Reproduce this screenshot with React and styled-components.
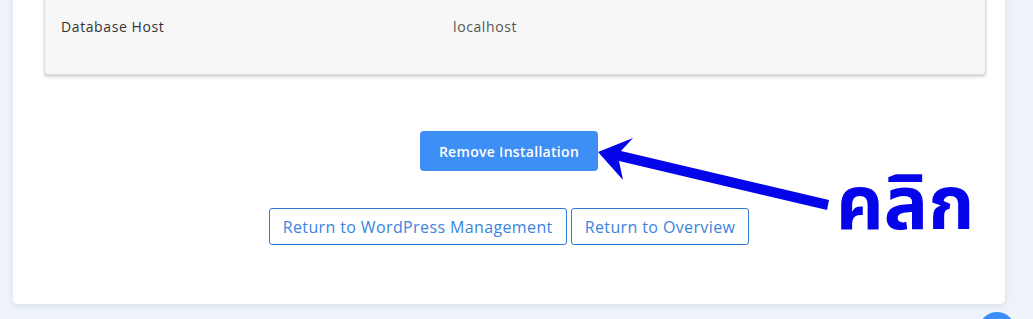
import React from 'react';
import styled, { createGlobalStyle } from 'styled-components';

const GlobalStyle = createGlobalStyle`
    html, body {
        margin: 0;
        padding: 0;
        background: #eef3f9;
        font-family: 'Open Sans', 'Liberation Sans', sans-serif;
        overflow: hidden;
    }
`;

const Page = styled.div`
    position: relative;
    display: flex;
    flex-direction: column;
    width: 1033px;
    height: 319px;
    padding: 0 28px 0 13px;
    box-sizing: border-box;
    overflow: hidden;
`;

const Card = styled.div`
    margin-top: -20px;
    background: #fff;
    border-radius: 0 0 5px 5px;
    box-shadow: 0 2px 6px rgba(30, 50, 80, 0.1);
    padding: 0 25px 59px;
    display: flex;
    flex-direction: column;
    align-items: center;
`;

const Details = styled.div`
    align-self: stretch;
    margin: 0 -6px 0 6px;
    background: #f7f7f7;
    border: 1px solid #dcdcdc;
    border-top: none;
    border-radius: 0 0 4px 4px;
    box-shadow: 0 2px 3px rgba(0, 0, 0, 0.18);
    padding: 37px 16px 37px;
`;

const Row = styled.div`
    display: grid;
    grid-template-columns: 392px 1fr;
    font-size: 14px;
    line-height: 20px;
    letter-spacing: 0.6px;
    color: #333;
`;

const Value = styled.span`
    color: #555;
`;

const PrimaryButton = styled.button`
    margin-top: 56px;
    width: 178px;
    height: 40px;
    border: none;
    border-radius: 4px;
    background: #3d8ef5;
    color: #fff;
    font-family: inherit;
    font-size: 14px;
    font-weight: 600;
    letter-spacing: 0.3px;
    cursor: pointer;
`;

const ButtonGroup = styled.div`
    margin-top: 37px;
    display: flex;
    gap: 4px;
`;

const OutlineButton = styled.button`
    height: 37px;
    padding: 0 13px;
    background: #fff;
    border: 1px solid #2f7bd6;
    border-radius: 3px;
    color: #3a84de;
    font-family: inherit;
    font-size: 16px;
    letter-spacing: 0.38px;
    cursor: pointer;
`;

const Arrow = styled.svg`
    position: absolute;
    left: 590px;
    top: 130px;
`;

const Note = styled.div`
    position: absolute;
    left: 836px;
    top: 169px;
    color: #0505ea;
    font-size: 74px;
    font-weight: 700;
    line-height: 1;
    font-family: 'Noto Sans Thai', 'Noto Sans', 'DejaVu Sans', sans-serif;
`;

const ChatBubble = styled.div`
    position: absolute;
    left: 979px;
    top: 312px;
    width: 36px;
    height: 36px;
    border-radius: 50%;
    background: #3a8ef5;
`;

export default function App() {
    return (
        <>
            <GlobalStyle />
            <Page>
                <Card>
                    <Details>
                        <Row>
                            <span>Database Host</span>
                            <Value>localhost</Value>
                        </Row>
                    </Details>
                    <PrimaryButton>Remove Installation</PrimaryButton>
                    <ButtonGroup>
                        <OutlineButton>Return to WordPress Management</OutlineButton>
                        <OutlineButton>Return to Overview</OutlineButton>
                    </ButtonGroup>
                </Card>
                <Arrow width="250" height="90" viewBox="0 0 250 90">
                    <path
                        d="M8 22 L43 8 L31 21 L239 70 L237 80 L29 31 L33 50 Z"
                        fill="#0505ea"
                    />
                </Arrow>
                <Note>คลิก</Note>
                <ChatBubble />
            </Page>
        </>
    );
}
